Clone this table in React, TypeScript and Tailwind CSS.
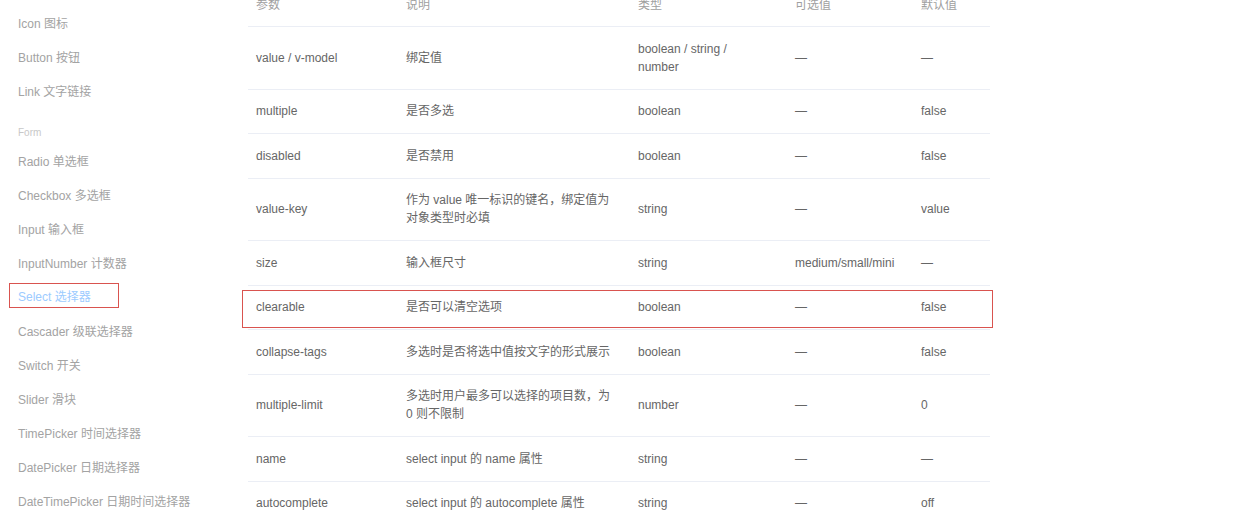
import React from "react";

const navItems: { label: string; group?: boolean; active?: boolean }[] = [
  { label: "Icon 图标" },
  { label: "Button 按钮" },
  { label: "Link 文字链接" },
  { label: "Form", group: true },
  { label: "Radio 单选框" },
  { label: "Checkbox 多选框" },
  { label: "Input 输入框" },
  { label: "InputNumber 计数器" },
  { label: "Select 选择器", active: true },
  { label: "Cascader 级联选择器" },
  { label: "Switch 开关" },
  { label: "Slider 滑块" },
  { label: "TimePicker 时间选择器" },
  { label: "DatePicker 日期选择器" },
  { label: "DateTimePicker 日期时间选择器" },
];

type Row = {
  name: string;
  desc: React.ReactNode;
  type: React.ReactNode;
  options: string;
  def: string;
  tall?: boolean;
  marked?: boolean;
};

const rows: Row[] = [
  { name: "value / v-model", desc: "绑定值", type: <>boolean / string /<br />number</>, options: "—", def: "—", tall: true },
  { name: "multiple", desc: "是否多选", type: "boolean", options: "—", def: "false" },
  { name: "disabled", desc: "是否禁用", type: "boolean", options: "—", def: "false" },
  { name: "value-key", desc: <>作为 value 唯一标识的键名，绑定值为<br />对象类型时必填</>, type: "string", options: "—", def: "value", tall: true },
  { name: "size", desc: "输入框尺寸", type: "string", options: "medium/small/mini", def: "—" },
  { name: "clearable", desc: "是否可以清空选项", type: "boolean", options: "—", def: "false", marked: true },
  { name: "collapse-tags", desc: "多选时是否将选中值按文字的形式展示", type: "boolean", options: "—", def: "false" },
  { name: "multiple-limit", desc: <>多选时用户最多可以选择的项目数，为<br />0 则不限制</>, type: "number", options: "—", def: "0", tall: true },
  { name: "name", desc: "select input 的 name 属性", type: "string", options: "—", def: "—" },
  { name: "autocomplete", desc: "select input 的 autocomplete 属性", type: "string", options: "—", def: "off" },
];

const cols = "grid grid-cols-[150px_232px_157px_126px_77px]";
const cell = "pl-2 flex items-center";

export default function App() {
  return (
    <div
      className="w-[1242px] h-[512px] overflow-hidden bg-white flex text-[12px] leading-[18px]"
      style={{ fontFamily: '"Liberation Sans", Arial, "Noto Sans CJK SC", sans-serif' }}
    >
      {/* Sidebar */}
      <aside className="w-[248px] shrink-0 pt-[15px]">
        {navItems.map((item) =>
          item.group ? (
            <div key={item.label} className="pl-[18px] h-[36px] pt-[7px] text-[10px] text-[#c8c8c8]">
              {item.label}
            </div>
          ) : (
            <div key={item.label} className="h-[34px] flex items-start">
              {item.active ? (
                <div className="ml-[9px] mt-[-6px] w-[110px] h-[25px] border border-[#d9534f] pl-[8px] pt-[3px] flex items-center text-[#9ccbff]">
                  {item.label}
                </div>
              ) : (
                <div className="pl-[18px] text-[#a3a3a3]">{item.label}</div>
              )}
            </div>
          )
        )}
      </aside>

      {/* Attributes table */}
      <div className="w-[742px] mt-[-17px] text-[#666]">
        <div className={`${cols} h-[44px] border-b border-[#ebeef5] text-[#a0a0a0]`}>
          <div className={cell}>参数</div>
          <div className={cell}>说明</div>
          <div className={cell}>类型</div>
          <div className={cell}>可选值</div>
          <div className={cell}>默认值</div>
        </div>
        {rows.map((r) => (
          <div
            key={r.name}
            className={`relative ${cols} ${r.tall ? "h-[62.5px]" : "h-[44.5px]"} border-b border-[#ebeef5]`}
          >
            {r.marked && (
              <div className="absolute left-[-6px] right-[-3px] top-[4px] bottom-[1px] border border-[#d9534f]" />
            )}
            <div className={cell}>{r.name}</div>
            <div className={cell}>{r.desc}</div>
            <div className={cell}>{r.type}</div>
            <div className={cell}>{r.options}</div>
            <div className={cell}>{r.def}</div>
          </div>
        ))}
      </div>
    </div>
  );
}
